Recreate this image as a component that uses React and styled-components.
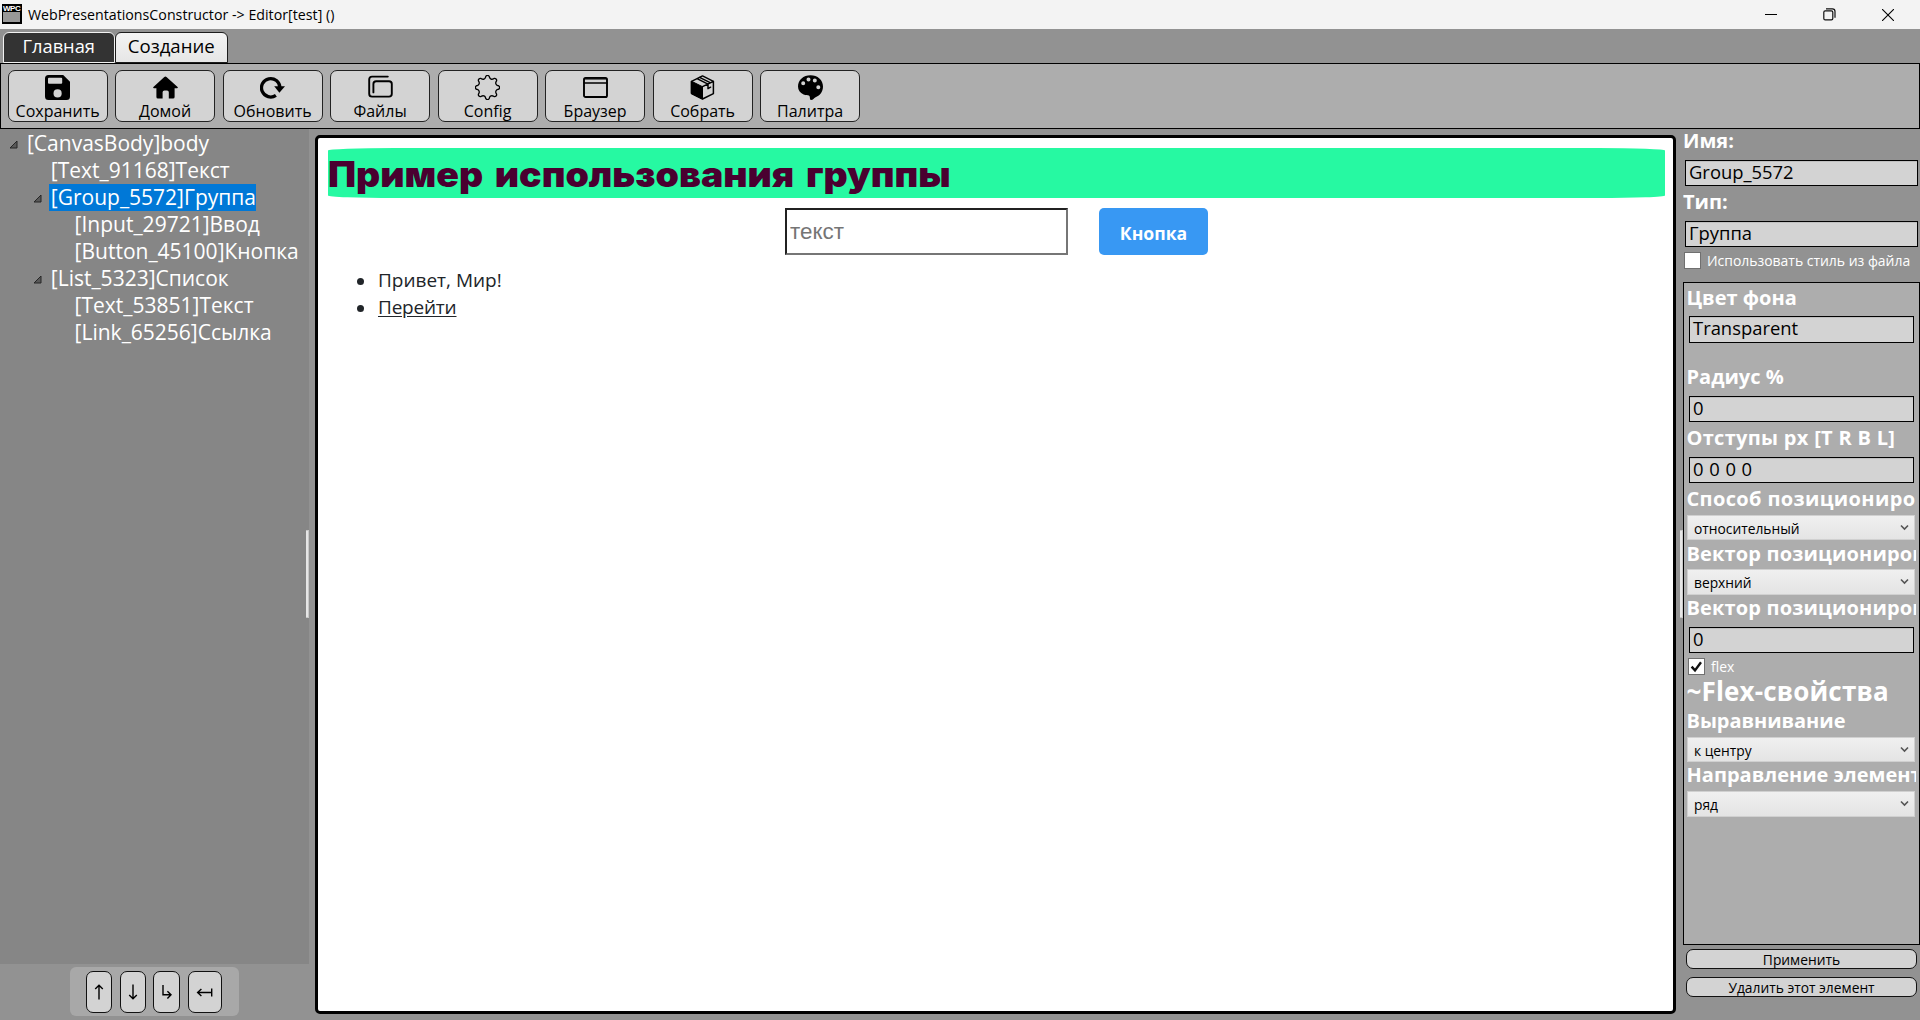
import React from "react";
import styled, { createGlobalStyle, css } from "styled-components";

const Global = createGlobalStyle`
  * { box-sizing: border-box; }
  body {
    margin: 0;
    background: #929292;
    font-family: "Open Sans", "Noto Sans", sans-serif;
    color: #000;
    overflow: hidden;
  }
`;

const Window = styled.div`
  width: 1920px;
  height: 1020px;
  display: flex;
  flex-direction: column;
  background: #929292;
  white-space: nowrap;
`;

/* Title bar */
const TitleBar = styled.header`
  height: 29px;
  background: #f3f3f3;
  display: flex;
  align-items: center;
  padding: 0 26px 0 2px;
`;
const AppBadge = styled.div`
  width: 20px;
  height: 20px;
  margin-top: -1px;
  border: 1px solid #000;
  border-width: 1px 2px 2px 1px;
  background: linear-gradient(#000 0 7px, #989898 7px);
  color: #fff;
  font: 700 8px/8px "Liberation Sans", sans-serif;
  letter-spacing: -0.5px;
`;
const TitleText = styled.div`
  margin-left: 6px;
  font-size: 14.2px;
  letter-spacing: 0.02px;
  line-height: 25px;
  height: 26px;
  flex: 1;
`;
const WindowButtons = styled.div`
  display: flex;
  align-items: center;
  gap: 46px;
`;

/* Tabs */
const Tabs = styled.nav`
  height: 34px;
  display: flex;
  align-items: flex-start;
  padding: 3px 0 0 2.5px;
`;
const Tab = styled.div`
  width: 112.5px;
  height: 31px;
  border: 1px solid ${(p) => (p.$active ? "#f2f2f2" : "#1c1c1c")};
  border-radius: 6px 6px 0 0;
  background: ${(p) => (p.$active ? "#333" : "linear-gradient(#f3f3f3, #e6e6e6)")};
  color: ${(p) => (p.$active ? "#fff" : "#000")};
  font-size: ${(p) => (p.$active ? 18.3 : 18.6)}px;
  line-height: 26px;
  text-align: center;
`;

/* Toolbar */
const Toolbar = styled.div`
  height: 66px;
  flex: none;
  border: 1px solid #000;
  background: #adadad;
  display: flex;
  gap: 7.5px;
  padding: 6px 0 0 6.6px;
`;
const Tool = styled.button`
  width: 100px;
  height: 52px;
  padding: 4px 0 0;
  border: 1px solid #222;
  border-radius: 7px;
  background: #d3d3d3;
  display: flex;
  flex-direction: column;
  align-items: center;
  font: 400 16px/22px "Open Sans", sans-serif;
  color: #000;
  svg { display: block; flex: none; }
`;

/* Work area */
const Work = styled.main`
  flex: 1;
  display: flex;
  align-items: stretch;
  min-height: 0;
`;
const LeftColumn = styled.aside`
  position: relative;
  width: 315px;
  display: flex;
  flex-direction: column;
`;
const Tree = styled.div`
  width: 309px;
  height: 835px;
  background: #868686;
  padding-top: 1px;
`;
const TreeRow = styled.div`
  height: 27px;
  display: flex;
  padding-left: ${(p) => 9 + p.$depth * 23.8}px;
  color: #fff;
  font-size: 21px;
  line-height: 26px;
`;
const TreeArrow = styled.svg`
  width: 9px;
  height: 9px;
  margin: 9.5px 7px 0 0;
  flex: none;
  visibility: ${(p) => (p.$open ? "visible" : "hidden")};
`;
const TreeLabel = styled.span`
  padding: 0 0 0 2px;
  ${(p) => p.$selected && css`background: #0078d7;`}
`;
const grip = css`
  width: 3px;
  height: 88px;
  background: #e6e6e6;
  border: 1px solid #c8c8c8;
  border-width: 1px 1px 1px 0;
`;
const LeftGrip = styled.div`
  ${grip}
  position: absolute;
  left: 306px;
  top: 401px;
`;
const MoveBar = styled.div`
  margin: 3px 0 0 70px;
  width: 169px;
  height: 49px;
  border-radius: 6px;
  background: #a8a8a8;
  display: flex;
  gap: 7.5px;
  padding: 4px 0 0 16.3px;
`;
const MoveButton = styled.button`
  width: ${(p) => p.$w}px;
  height: 42px;
  padding: 0;
  border: 1px solid #111;
  border-radius: 7px;
  background: #d3d3d3;
  display: flex;
  align-items: center;
  justify-content: center;
`;

/* Canvas */
const Canvas = styled.section`
  width: 1361px;
  height: 879px;
  margin-top: 6px;
  border: 3px solid #000;
  border-radius: 5px;
  background: #fff;
  padding: 10px 8px 0 10px;
  color: #212529;
`;
const Heading = styled.h1`
  margin: 0;
  height: 50px;
  border-radius: 5%;
  background: #26f9a2;
  color: #4a0030;
  font: 900 35px/53px Inter, sans-serif;
`;
const WideText = styled.span`
  display: inline-block;
  word-spacing: 4px;
  transform: scaleX(1.069);
  transform-origin: left center;
`;
const Group = styled.div`
  display: flex;
  justify-content: center;
  gap: 31px;
  margin-top: 10px;
`;
const DemoInput = styled.input`
  width: 283px;
  height: 47px;
  border: 2px solid;
  border-color: #212121 #767676 #767676 #212121;
  padding: 0 0 0 3px;
  font: 22.4px "Liberation Sans", Arial, sans-serif;
  background: #fff;
  &::placeholder { color: #757575; opacity: 1; }
`;
const DemoButton = styled.button`
  width: 109px;
  height: 47px;
  border: 0;
  border-radius: 5px;
  padding: 3px 0 0;
  background: #3898f3;
  color: #fff;
  font: 700 17.6px "Open Sans", sans-serif;
`;
const List = styled.ul`
  list-style: none;
  margin: 12px 0 0;
  padding: 0 0 0 29px;
  font-size: 19px;
  line-height: 27px;
`;
const Item = styled.li`
  display: flex;
  align-items: center;
  gap: 14px;
  &::before {
    content: "";
    width: 7px;
    height: 7px;
    border-radius: 50%;
    background: #212529;
    margin-top: 1px;
  }
`;
const DemoLink = styled.a`
  text-decoration: underline;
  text-underline-offset: 2px;
  letter-spacing: -0.2px;
`;

/* Properties */
const Gutter = styled.div`
  width: 7px;
  display: flex;
  align-items: flex-start;
  justify-content: flex-end;
  padding-top: 401px;
`;
const Grip = styled.div`${grip}`;
const Props = styled.aside`
  width: 237px;
  display: flex;
  flex-direction: column;
`;
const Label = styled.div`
  height: ${(p) => p.$h || 27}px;
  line-height: ${(p) => p.$lh || 25}px;
  margin: ${(p) => p.$mt || 0}px 3px ${(p) => p.$mb || 0}px ${(p) => p.$ml ?? 2.5}px;
  color: #fff;
  font-weight: 700;
  font-size: ${(p) => (p.$big ? 26 : 20)}px;
  letter-spacing: ${(p) => p.$ls ?? 0}px;
  overflow-x: clip;
  flex: none;
`;
const Field = styled.div`
  height: ${(p) => p.$h || 26}px;
  flex: none;
  margin: 0 ${(p) => (p.$outer ? 2 : 5)}px 0 ${(p) => (p.$outer ? 2 : 5)}px;
  border: 1px solid #000;
  box-shadow: inset 0 1px 0 #bfbfbf;
  background: #d3d3d3;
  padding-left: 3px;
  font-size: 18.4px;
  line-height: 21px;
  word-spacing: ${(p) => p.$ws || 0}px;
`;
const Select = styled.div`
  height: ${(p) => p.$h || 26}px;
  flex: none;
  margin: 0 4px 0 3px;
  border: 1px solid #d0d0d0;
  background: linear-gradient(#f0f0f0, #e4e4e4);
  display: flex;
  justify-content: space-between;
  padding: 0 5px 0 6px;
  font-size: 13.8px;
  line-height: 26px;
  svg { margin-top: 8px; }
`;
const CheckRow = styled.label`
  display: flex;
  flex: none;
  height: 17px;
  margin: 5px 0 0 ${(p) => p.$ml}px;
  gap: 6px;
  color: #fff;
  font-size: 13.95px;
  line-height: 17px;
`;
const Box = styled.span`
  width: 17px;
  height: 17px;
  border: 1px solid #707070;
  background: #fff;
  svg { display: block; }
`;
const Panel = styled.div`
  margin-top: 13px;
  height: 663px;
  flex: none;
  border: 1px solid #000;
  background: #adadad;
  display: flex;
  flex-direction: column;
`;
const Action = styled.button`
  height: 20px;
  flex: none;
  margin: ${(p) => p.$mt}px 3px 0 3px;
  padding: 0;
  border: 1px solid #111;
  border-radius: 7px;
  background: #d3d3d3;
  color: #000;
  font: 400 13.8px/17px "Open Sans", sans-serif;
`;

/* Icons */
const Ico = ({ children }) => (
  <svg width="25" height="25" viewBox="0 0 25 25" fill="none" stroke="#000" strokeLinecap="round" strokeLinejoin="round">
    {children}
  </svg>
);

const gearPath = (() => {
  const pt = (r, deg) => {
    const a = ((deg - 90) * Math.PI) / 180;
    return `${(12.5 + r * Math.cos(a)).toFixed(2)} ${(12.5 + r * Math.sin(a)).toFixed(2)}`;
  };
  let d = `M${pt(11.2, -9)}`;
  for (let i = 0; i < 8; i++) {
    const t = i * 45;
    d += `A2 2 0 0 1 ${pt(11.2, t + 9)}`;
    d += `L${pt(10.4, t + 11)}A2.6 2.6 0 0 0 ${pt(10.4, t + 34)}`;
    d += `L${pt(11.2, t + 36)}`;
  }
  return d + "Z";
})();

const icons = {
  save: (
    <Ico>
      <path fill="#000" stroke="none" fillRule="evenodd" d="M3.5 0H18.2L25 6.8V21.5A3.5 3.5 0 0 1 21.5 25H3.5A3.5 3.5 0 0 1 0 21.5V3.5A3.5 3.5 0 0 1 3.5 0ZM4 2.8A1 1 0 0 0 3 3.8V7.7A1 1 0 0 0 4 8.7H16.2A1 1 0 0 0 17.2 7.7V3.8A1 1 0 0 0 16.2 2.8ZM12.6 14.3A4.1 4.1 0 1 0 12.6 22.5A4.1 4.1 0 1 0 12.6 14.3Z" />
    </Ico>
  ),
  home: (
    <Ico>
      <path fill="#000" stroke="none" d="M11.3 1.9Q12.4 1 13.5 1.9L24.6 12Q25.3 13 24 13.2H21.6V22Q21.6 23.6 20 23.6H15.8V17.2Q15.8 15.4 14 15.4H11.4Q9.6 15.4 9.6 17.2V23.6H5Q3.4 23.6 3.4 22V13.2H1Q-.3 13 .4 12Z" />
    </Ico>
  ),
  refresh: (
    <Ico>
      <path strokeWidth="3.3" strokeLinecap="butt" d="M15.9 20.4A9.2 9.2 0 1 1 19.9 12.6" />
      <path fill="#000" stroke="none" d="M14.2 11.2L25 11.2L19.4 17.8Z" />
    </Ico>
  ),
  files: (
    <Ico>
      <path strokeWidth="1.9" d="M19.8 1.6H4Q1.2 1.6 1.2 4.4V18.7Q1.2 21.6 4.1 21.6H21Q23.8 21.6 23.8 18.8V9Q23.8 6.2 21 6.2H8.2Q5.4 6.2 5.4 9V17.4" />
    </Ico>
  ),
  config: (
    <Ico>
      <path strokeWidth="1.3" d={gearPath} />
    </Ico>
  ),
  browser: (
    <Ico>
      <rect x="1" y="3" width="23" height="19" rx="1.6" strokeWidth="1.9" />
      <path strokeWidth="1.6" d="M1 8H24" />
      <path strokeWidth="1" stroke="#555" d="M2.4 4.4H22.6" />
    </Ico>
  ),
  build: (
    <Ico>
      <path strokeWidth="1.5" d="M12.5 .9L23.4 6.3V18.6L12.5 24L1.6 18.6V6.3ZM12.5 11.7L23.4 6.3M7 3.7L18 9.2V13.6M9.6 2.4L20.6 7.8M18 13.6L20.6 12.2" />
      <path fill="#000" strokeWidth="1" d="M1.6 6.3L12.5 11.7V24L1.6 18.6Z" />
    </Ico>
  ),
  palette: (
    <Ico>
      <path fill="#000" stroke="none" fillRule="evenodd" d="M12.5 .2C19.6 .2 25 5 25 11.4C25 17 21.5 20.6 17.6 22.2C15.8 23 15.2 24.9 13 24.9C11.2 24.9 12.6 21.4 10.9 20.5C9.6 19.8 7.8 20.6 5.6 19.4C2 17.6 0 15 0 11.4C0 5 5.4 .2 12.5 .2ZM5.2 6.3A2 2 0 1 0 5.2 10.3A2 2 0 1 0 5.2 6.3ZM10.5 2.5A2 2 0 1 0 10.5 6.5A2 2 0 1 0 10.5 2.5ZM16.8 3.4A2 2 0 1 0 16.8 7.4A2 2 0 1 0 16.8 3.4ZM20.3 10.2A2 2 0 1 0 20.3 14.2A2 2 0 1 0 20.3 10.2Z" />
    </Ico>
  ),
};

const Chevron = () => (
  <svg width="9" height="8" viewBox="0 0 9 8" fill="none" stroke="#555" strokeWidth="1.6">
    <path d="M1 1.5L4.5 5L8 1.5" />
  </svg>
);

const Glyph = ({ w, d }) => (
  <svg width={w} height="16" viewBox={`0 0 ${w} 16`} fill="none" stroke="#000" strokeWidth="1.4">
    <path d={d} />
  </svg>
);

const tools = [
  ["save", "Сохранить"],
  ["home", "Домой"],
  ["refresh", "Обновить"],
  ["files", "Файлы"],
  ["config", "Config"],
  ["browser", "Браузер"],
  ["build", "Собрать"],
  ["palette", "Палитра"],
];

const tree = [
  [0, true, "[CanvasBody]body"],
  [1, false, "[Text_91168]Текст"],
  [1, true, "[Group_5572]Группа", true],
  [2, false, "[Input_29721]Ввод"],
  [2, false, "[Button_45100]Кнопка"],
  [1, true, "[List_5323]Список"],
  [2, false, "[Text_53851]Текст"],
  [2, false, "[Link_65256]Ссылка"],
];

const moves = [
  [26, 10, "M5 15.5V1.2M1.2 5L5 1.2L8.8 5"],
  [26, 10, "M5 .5V14.8M1.2 11L5 14.8L8.8 11"],
  [27, 11, "M2 1V10.8H9.8M6.4 7.2L10 10.8L6.4 14.4"],
  [34, 17, "M1.4 8.5H15.5M5.4 4.9L1.6 8.5L5.4 12.1M15.7 4.4V12.6"],
];

export default function App() {
  return (
    <Window>
      <Global />
      <TitleBar>
        <AppBadge>WPC</AppBadge>
        <TitleText>WebPresentationsConstructor -&gt; Editor[test] ()</TitleText>
        <WindowButtons>
          <svg width="12" height="12" stroke="#000"><path d="M0 5.5H12" /></svg>
          <svg width="13" height="13" fill="none" stroke="#111" strokeWidth="1.2">
            <rect x=".8" y="2.9" width="9" height="9" rx="1.4" />
            <path d="M3 .8H9.4Q12 .8 12 3.4V9.8" />
          </svg>
          <svg width="12" height="12" stroke="#000" strokeWidth="1.1"><path d="M0 0L12 12M12 0L0 12" /></svg>
        </WindowButtons>
      </TitleBar>
      <Tabs>
        <Tab $active>Главная</Tab>
        <Tab>Создание</Tab>
      </Tabs>
      <Toolbar>
        {tools.map(([icon, name]) => (
          <Tool key={icon}>
            {icons[icon]}
            {name}
          </Tool>
        ))}
      </Toolbar>
      <Work>
        <LeftColumn>
          <Tree>
            {tree.map(([depth, open, name, selected]) => (
              <TreeRow key={name} $depth={depth}>
                <TreeArrow $open={open} viewBox="0 0 9 9">
                  <path d="M8 1V8H1Z" fill="#595959" stroke="#262626" />
                </TreeArrow>
                <TreeLabel $selected={selected}>{name}</TreeLabel>
              </TreeRow>
            ))}
          </Tree>
          <MoveBar>
            {moves.map(([w, gw, d]) => (
              <MoveButton key={d} $w={w}>
                <Glyph w={gw} d={d} />
              </MoveButton>
            ))}
          </MoveBar>
          <LeftGrip />
        </LeftColumn>

        <Canvas>
          <Heading><WideText>Пример использования группы</WideText></Heading>
          <Group>
            <DemoInput placeholder="текст" />
            <DemoButton>Кнопка</DemoButton>
          </Group>
          <List>
            <Item>Привет, Мир!</Item>
            <Item><DemoLink>Перейти</DemoLink></Item>
          </List>
        </Canvas>

        <Gutter><Grip /></Gutter>

        <Props>
          <Label $ml={0} $h={24} $lh={24} $mb={7}>Имя:</Label>
          <Field $outer>Group_5572</Field>
          <Label $ml={0} $mt={3} $mb={5}>Тип:</Label>
          <Field $outer>Группа</Field>
          <CheckRow $ml={1}><Box />Использовать стиль из файла</CheckRow>
          <Panel>
            <Label $mt={2} $mb={4}>Цвет фона</Label>
            <Field $h={27}>Transparent</Field>
            <Label $mt={21} $mb={5}>Радиус %</Label>
            <Field>0</Field>
            <Label $mt={3} $mb={5} $ls={0.3}>Отступы px [T R B L]</Label>
            <Field $ws={0.9}>0 0 0 0</Field>
            <Label $mt={3} $mb={2} $ls={0.35}>Способ позиционирования</Label>
            <Select $h={25}>относительный<Chevron /></Select>
            <Label $mt={1} $mb={1} $ls={0.15}>Вектор позиционирования</Label>
            <Select>верхний<Chevron /></Select>
            <Label $mb={5} $ls={0.15}>Вектор позиционирования</Label>
            <Field>0</Field>
            <CheckRow $ml={4}>
              <Box>
                <svg width="15" height="15" fill="none" stroke="#111" strokeWidth="2.4"><path d="M2.6 7.6L6 11.4L12 3.2" /></svg>
              </Box>
              flex
            </CheckRow>
            <Label $big $mt={1} $h={30} $lh={30} $ls={0.15}>~Flex-свойства</Label>
            <Label $mt={2} $mb={2} $ls={-0.05}>Выравнивание</Label>
            <Select $h={25}>к центру<Chevron /></Select>
            <Label $mb={2}>Направление элементов</Label>
            <Select>ряд<Chevron /></Select>
          </Panel>
          <Action $mt={4}>Применить</Action>
          <Action $mt={8}>Удалить этот элемент</Action>
        </Props>
      </Work>
    </Window>
  );
}
